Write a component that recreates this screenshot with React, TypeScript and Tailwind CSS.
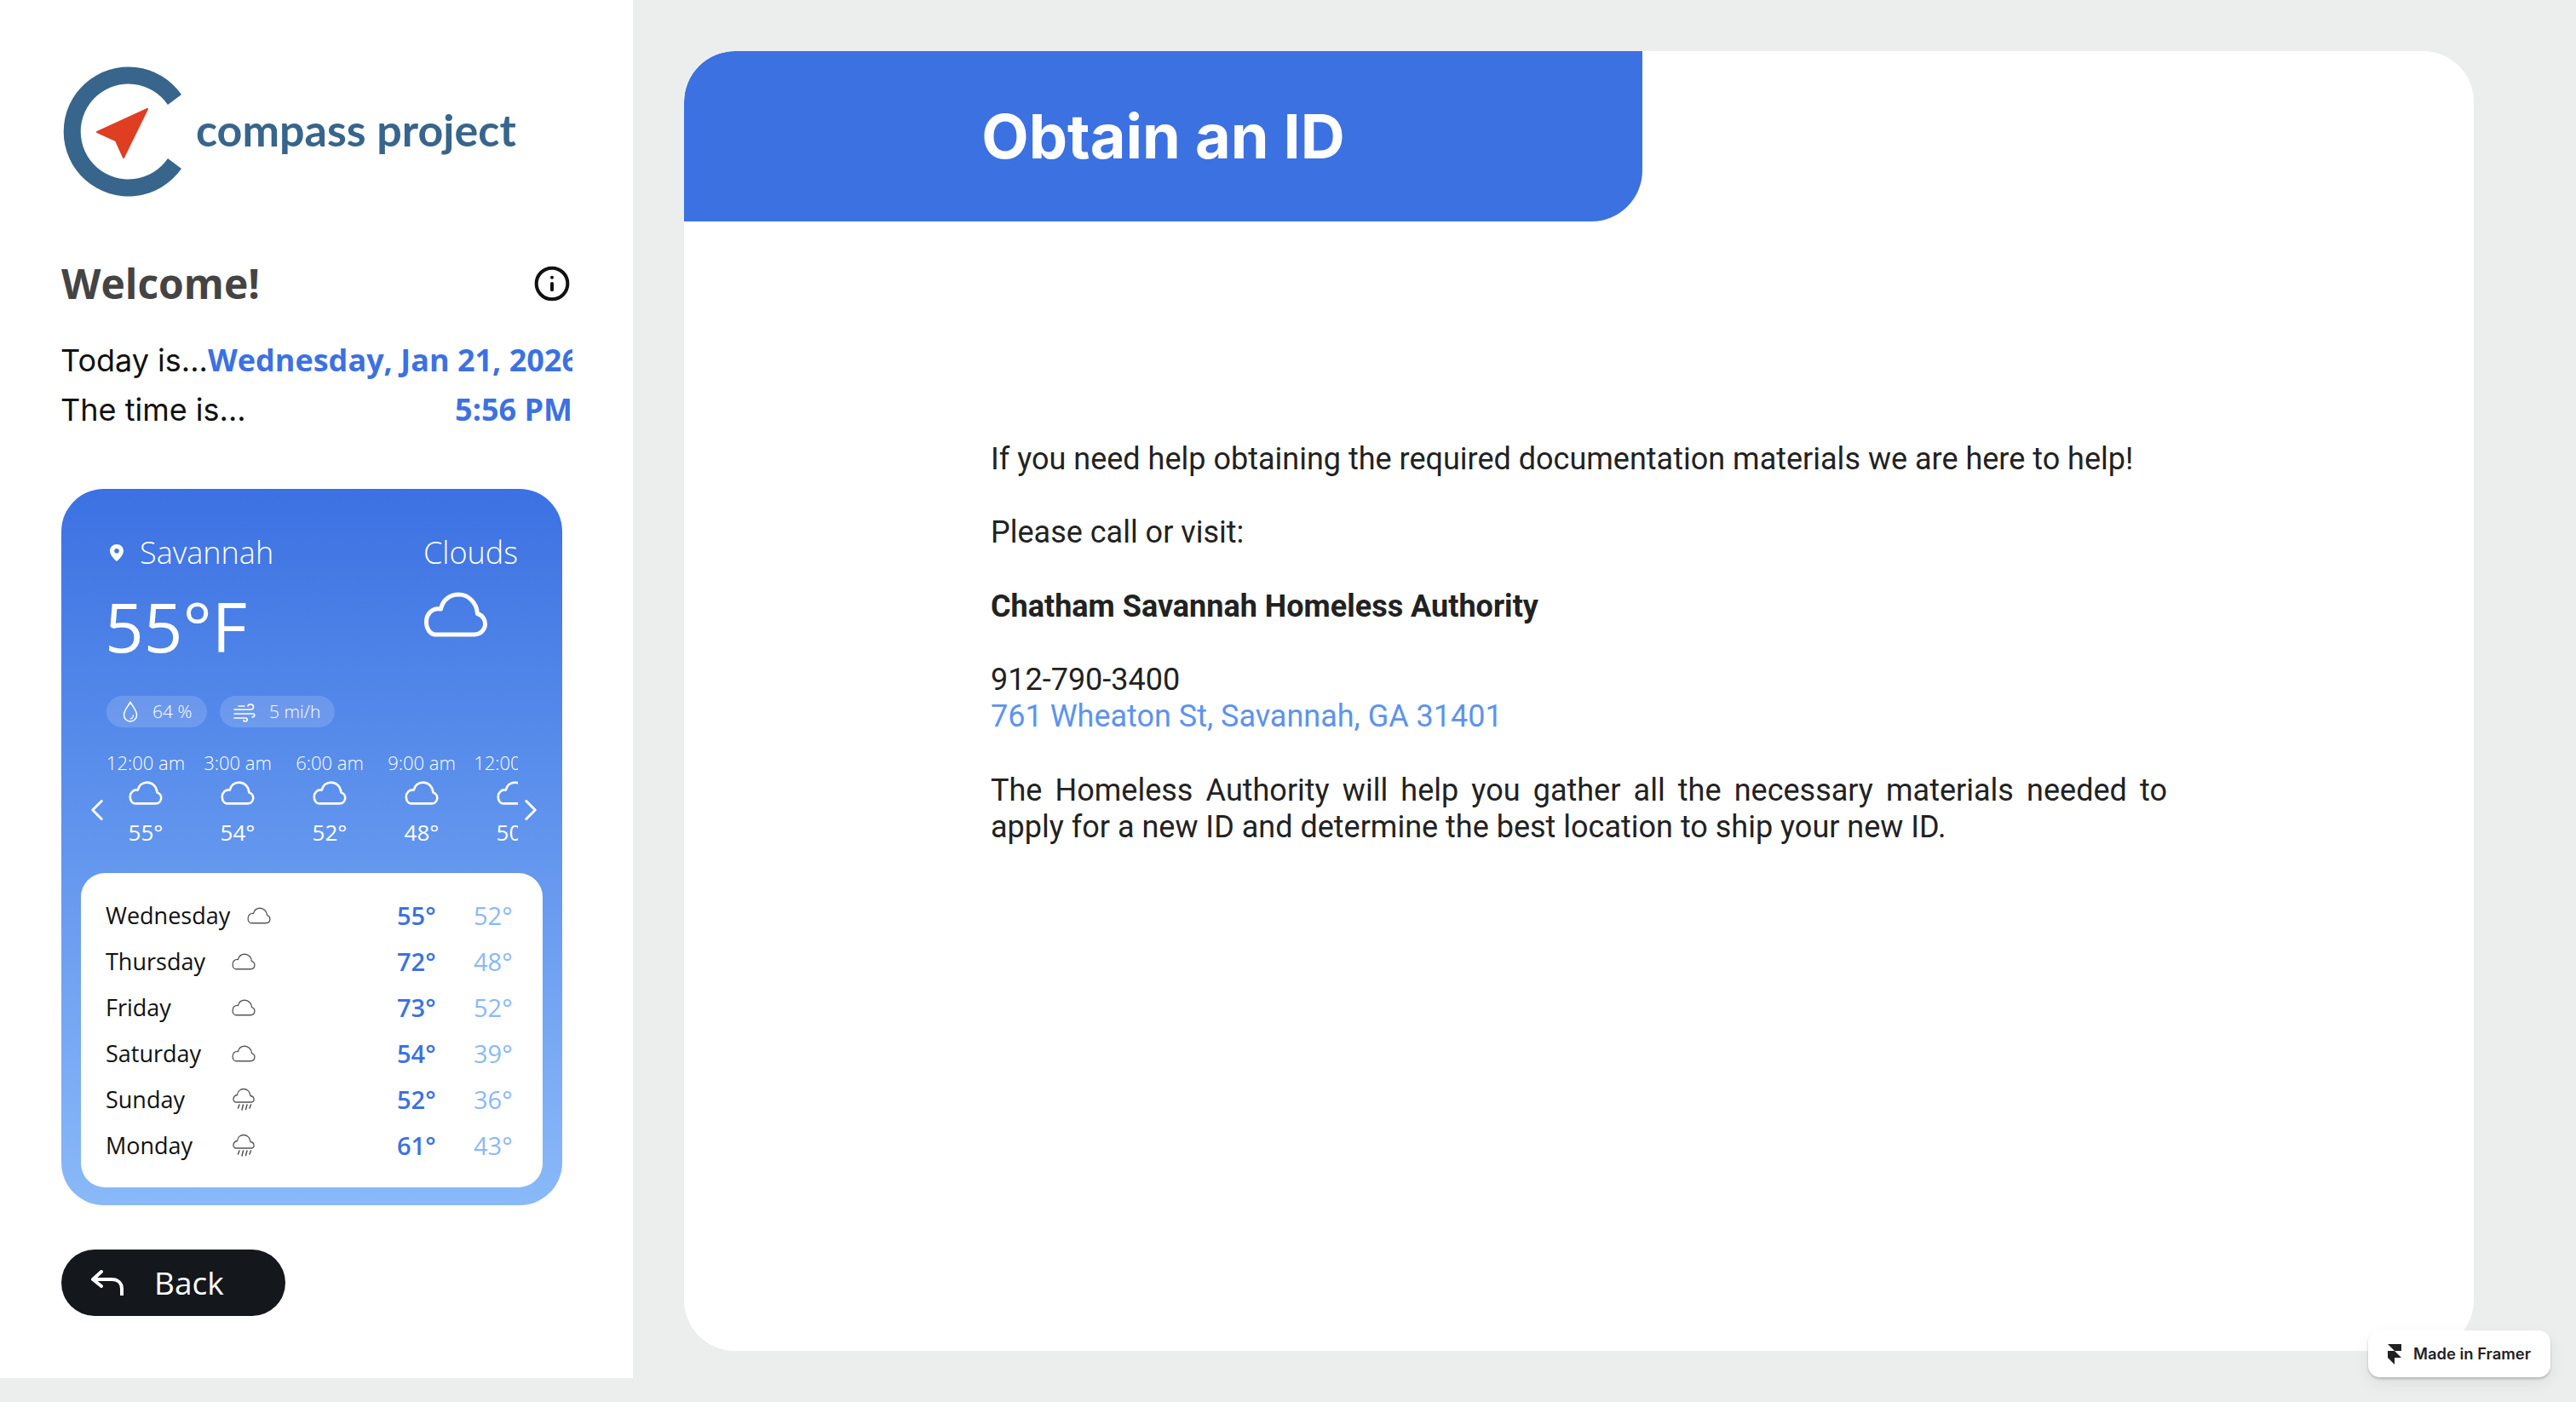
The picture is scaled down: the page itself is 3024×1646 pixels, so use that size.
import { ChevronLeft, ChevronRight, Info } from 'lucide-react';

const HOURS = [
  { time: '12:00 am', temp: '55°' },
  { time: '3:00 am', temp: '54°' },
  { time: '6:00 am', temp: '52°' },
  { time: '9:00 am', temp: '48°' },
  { time: '12:00 pm', temp: '50°' },
];

const DAYS = [
  { name: 'Wednesday', high: '55°', low: '52°', rain: false },
  { name: 'Thursday', high: '72°', low: '48°', rain: false },
  { name: 'Friday', high: '73°', low: '52°', rain: false },
  { name: 'Saturday', high: '54°', low: '39°', rain: false },
  { name: 'Sunday', high: '52°', low: '36°', rain: true },
  { name: 'Monday', high: '61°', low: '43°', rain: true },
];

const CLOUD_PATH = 'M14 50H60a12.5 12.5 0 0 0 3-24.5C62 12 52 3 41 3C30 3 22 10 20 20C10 18 3 26 3 35C3 44 8 50 14 50Z';

function Cloud({ className, strokeWidth }: { className: string; strokeWidth: number }) {
  return (
    <svg viewBox="0 0 75 53" fill="none" className={className}>
      <path d={CLOUD_PATH} stroke="currentColor" strokeWidth={strokeWidth} strokeLinejoin="round" />
    </svg>
  );
}

function RainCloud() {
  return (
    <svg viewBox="0 0 28 28" fill="none" className="h-[28px] w-[28px] text-[#555]">
      <path
        d="M5 17H23C27 16.500 27.500 10.500 22 9.500C21.500 4.500 18 1.500 14 1.500C10 1.500 7 4.500 6.500 8.500C1 9.500 0.500 16.500 5 17Z"
        stroke="currentColor"
        strokeWidth="1.300"
      />
      <path d="M9 20L7.500 24M13.500 20L12 26M18 20L16.500 25.500M22.500 20L21 24" stroke="currentColor" strokeWidth="1.500" strokeLinecap="round" />
    </svg>
  );
}

function Logo() {
  return (
    <svg viewBox="0 0 145 160" className="h-[160px] w-[145px] shrink-0">
      <path d="M141 35A76 76 0 1 0 141 122L125 110A56 56 0 1 1 125 47Z" fill="#37658c" />
      <path d="M101 52L42 79L64 89L73 109Z" fill="#e03e22" stroke="#e03e22" strokeWidth="2" strokeLinejoin="round" />
    </svg>
  );
}

function WeatherCard() {
  return (
    <section className="relative mt-[64px] flex h-[841px] w-[588px] flex-col rounded-[50px] bg-gradient-to-b from-[#3c71e2] to-[#8ab9f8] px-[23px] text-white">
      <div className="mt-[52px] flex items-center justify-between pl-[34px] pr-[29px] text-[36px] leading-[46px] font-light">
        <div className="flex items-center gap-[19px]">
          <svg viewBox="0 0 16 20" className="h-[20px] w-[16px]">
            <path
              fillRule="evenodd"
              d="M8 0C3.600 0 0 3.400 0 7.700C0 12.500 5 17.500 8 20C11 17.500 16 12.500 16 7.700C16 3.400 12.400 0 8 0ZM8 5A2.800 2.800 0 1 1 8 10.600A2.800 2.800 0 0 1 8 5Z"
              fill="white"
            />
          </svg>
          <span>Savannah</span>
        </div>
        <span>Clouds</span>
      </div>

      <div className="mt-[1px] flex items-start justify-between pl-[28px] pr-[64px]">
        <span className="mt-[12px] text-[80px] leading-[100px]">55°F</span>
        <Cloud className="mt-[22px] h-[53px] w-[76px]" strokeWidth={5} />
      </div>

      <div className="mt-[32px] flex gap-[15px] pl-[30px] text-[21px] font-light">
        <div className="flex h-[37px] w-[118px] items-center gap-[17px] rounded-full bg-white/15 pl-[19px]">
          <svg viewBox="0 0 18 26" fill="none" className="h-[26px] w-[18px]">
            <path d="M9 1.500C6 6.500 1.500 11 1.500 16.500A7.500 7.500 0 0 0 16.500 16.500C16.500 11 12 6.500 9 1.500Z" stroke="white" strokeWidth="1.500" />
            <path d="M12.500 16.500C12.500 19 11 20.500 9 21" stroke="white" strokeWidth="1.200" strokeLinecap="round" />
          </svg>
          <span>64 %</span>
        </div>
        <div className="flex h-[37px] w-[135px] items-center gap-[16px] rounded-full bg-white/15 pl-[16px]">
          <svg viewBox="0 0 26 24" fill="none" className="h-[24px] w-[26px]">
            <path
              d="M1 9H20C24 9 25 4 21 3C19 2.500 17 3.500 17 5M1 14H23C26 14 25 18 22 18M1 19H14C17 19 17 23 14 23C13 23 12 22.500 12 21.500M6 5H13"
              stroke="white"
              strokeWidth="1.600"
              strokeLinecap="round"
            />
          </svg>
          <span>5 mi/h</span>
        </div>
      </div>

      <div className="mt-[26px] ml-[30px] flex w-[483px] gap-[16px] overflow-hidden">
        {HOURS.map((hour) => (
          <div key={hour.time} className="flex w-[92px] shrink-0 flex-col items-center whitespace-nowrap">
            <span className="text-[22px] leading-[30px] font-light">{hour.time}</span>
            <Cloud className="mt-[7px] h-[28px] w-[40px]" strokeWidth={5} />
            <span className="mt-[12px] text-[26px] leading-[40px]">{hour.temp}</span>
          </div>
        ))}
      </div>
      <ChevronLeft className="absolute top-[356px] left-[21px] h-[42px] w-[42px]" strokeWidth={1.700} />
      <ChevronRight className="absolute top-[356px] right-[16px] h-[42px] w-[42px]" strokeWidth={1.700} />

      <div className="mt-[28px] flex h-[369px] flex-col rounded-[28px] bg-white pt-[23px] pl-[29px] text-[#111]">
        {DAYS.map((day) => (
          <div key={day.name} className="flex h-[54px] shrink-0 items-center text-[27px]">
            <div className="flex w-[342px] shrink-0 items-center">
              <span className="min-w-[128px] whitespace-nowrap">{day.name}</span>
              <span className="ml-[20px] flex">
                {day.rain ? <RainCloud /> : <Cloud className="h-[20px] w-[28px] text-[#555]" strokeWidth={3.500} />}
              </span>
            </div>
            <span className="w-[90px] text-[29px] font-semibold text-[#3c71e2]">{day.high}</span>
            <span className="text-[29px] text-[#8ab9f8]">{day.low}</span>
          </div>
        ))}
      </div>
    </section>
  );
}

export default function App() {
  return (
    <div className="relative flex h-[1646px] w-[3024px] items-start overflow-hidden bg-[#eceeed] font-['Open_Sans',sans-serif]">
      <aside className="flex h-[1618px] w-[743px] shrink-0 flex-col bg-white pl-[72px]">
        <div className="mt-[76px] flex items-center">
          <Logo />
          <span className="-mt-[8px] ml-[13px] font-['Lato',sans-serif] text-[52px] font-bold text-[#37658c]">compass project</span>
        </div>

        <div className="mt-[63px] flex w-[598px] items-center justify-between">
          <h1 className="text-[48px] leading-[68px] font-bold text-[#444]">Welcome!</h1>
          <Info className="h-[44px] w-[44px] text-[#111]" strokeWidth={2.200} />
        </div>

        <div className="mt-[27px] -ml-[1px] flex h-[58px] w-[601px] items-center overflow-hidden whitespace-nowrap">
          <span className="font-['Inter',sans-serif] text-[36px] text-[#111]">Today is...</span>
          <span className="text-[36px] font-bold text-[#3c71e2]">Wednesday, Jan 21, 2026</span>
        </div>
        <div className="-ml-[1px] flex h-[58px] w-[601px] items-center justify-between">
          <span className="font-['Inter',sans-serif] text-[36px] text-[#111]">The time is...</span>
          <span className="text-[36px] font-bold text-[#3c71e2]">5:56 PM</span>
        </div>

        <WeatherCard />

        <button type="button" className="mt-[52px] flex h-[78px] w-[263px] items-center gap-[36px] rounded-full bg-[#14171c] pl-[35px] text-white">
          <svg viewBox="0 0 38 30" fill="none" className="h-[30px] w-[38px]">
            <path d="M12 2L2 11L12 19M2 11H24C31 11 36 15 36 22V29" stroke="white" strokeWidth="4" strokeLinecap="round" strokeLinejoin="round" />
          </svg>
          <span className="text-[37px] font-medium">Back</span>
        </button>
      </aside>

      <main className="mt-[60px] ml-[60px] h-[1526px] w-[2101px] overflow-hidden rounded-[60px] bg-white font-['Roboto',sans-serif]">
        <div className="flex h-[200px] w-[1125px] items-center justify-center rounded-tl-[60px] rounded-br-[60px] bg-[#3c71e2]">
          <h2 className="font-['Inter',sans-serif] text-[72px] font-bold text-white">Obtain an ID</h2>
        </div>

        <div className="mt-[258px] ml-[360px] w-[1381px] text-[36px] leading-[43.200px] text-[#222]">
          <p>If you need help obtaining the required documentation materials we are here to help!</p>
          <p className="mt-[43.200px]">Please call or visit:</p>
          <p className="mt-[43.200px] font-bold">Chatham Savannah Homeless Authority</p>
          <p className="mt-[43.200px]">912-790-3400</p>
          <p className="text-[#5c93ef]">761 Wheaton St, Savannah, GA 31401</p>
          <p className="mt-[43.200px] text-justify">
            The Homeless Authority will help you gather all the necessary materials needed to apply for a new ID and determine the best location to ship your new ID.
          </p>
        </div>
      </main>

      <div className="absolute top-[1562px] left-[2780px] flex h-[55px] w-[214px] items-center gap-[14px] rounded-[14px] bg-white pl-[23px] font-['Inter',sans-serif] text-[18.400px] font-semibold text-[#222] shadow-[0_2px_3px_rgba(0,0,0,0.2),0_8px_20px_rgba(0,0,0,0.06)]">
        <svg viewBox="4 0 16 24" className="h-[24px] w-[16px]">
          <path d="M4 0h16v8h-8zM4 8h8l8 8H4zM4 16h8v8z" fill="#222" />
        </svg>
        <span>Made in Framer</span>
      </div>
    </div>
  );
}
